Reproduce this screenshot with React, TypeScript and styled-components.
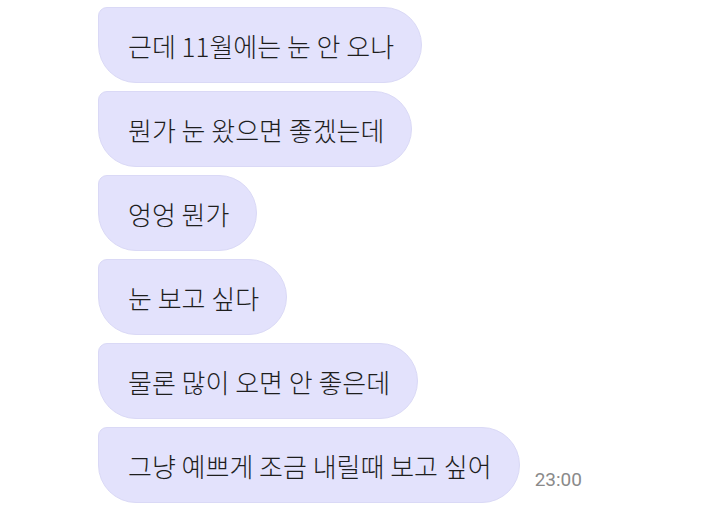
import React from "react";
import styled, { createGlobalStyle } from "styled-components";

const Global = createGlobalStyle`
  html, body { margin: 0; padding: 0; background: #ffffff; }
  body { font-family: "Noto Sans CJK KR", "Noto Sans", sans-serif; }
`;

const Chat = styled.div`
  display: flex;
  flex-direction: column;
  gap: 8px;
  padding: 7px 0 0 98px;
  width: 720px;
  height: 526px;
  box-sizing: border-box;
  overflow: hidden;
`;

const Row = styled.div`
  display: flex;
  align-items: flex-end;
  gap: 15px;
`;

const Bubble = styled.div`
  box-sizing: border-box;
  height: 76px;
  display: flex;
  align-items: center;
  padding: 0 27px 0 29px;
  background: #e3e2fc;
  border: 1px solid #dad9f6;
  border-radius: 9px 38px 38px 38px;
  color: #1e1e1e;
  font-family: "Noto Sans CJK KR", sans-serif;
  font-size: 26px;
  font-weight: 300;
  white-space: nowrap;
`;

const Time = styled.span`
  font-family: Roboto, "Noto Sans", sans-serif;
  font-size: 19px;
  color: #8a8a8a;
  padding-bottom: 12px;
`;

const messages = [
  "근데 11월에는 눈 안 오나",
  "뭔가 눈 왔으면 좋겠는데",
  "엉엉 뭔가",
  "눈 보고 싶다",
  "물론 많이 오면 안 좋은데",
  "그냥 예쁘게 조금 내릴때 보고 싶어",
];

export default function App() {
  return (
    <>
      <Global />
      <Chat>
        {messages.map((m, i) => (
          <Row key={i}>
            <Bubble>{m}</Bubble>
            {i === messages.length - 1 && <Time>23:00</Time>}
          </Row>
        ))}
      </Chat>
    </>
  );
}
